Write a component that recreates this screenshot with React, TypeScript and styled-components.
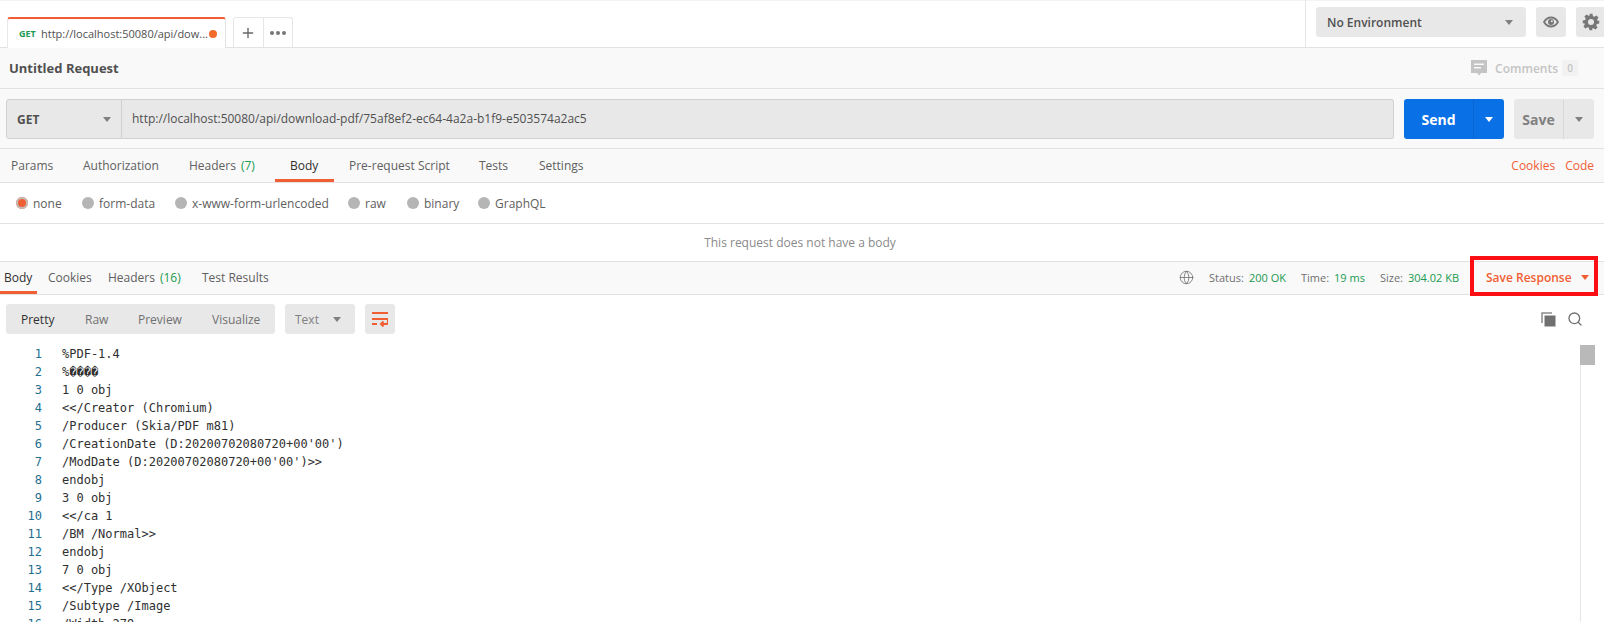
import styled, { createGlobalStyle } from 'styled-components';
import { Globe, Plus, Search } from 'lucide-react';

const GlobalStyle = createGlobalStyle`
  html, body {
    margin: 0;
    padding: 0;
    background: #fff;
  }
  body {
    font-family: "Open Sans", "Liberation Sans", sans-serif;
    font-size: 12px;
    color: #505050;
  }
`;

const orange = '#f15e33';
const green = '#209a50';

const Page = styled.div`
  width: 1604px;
  height: 622px;
  overflow: hidden;
  display: flex;
  flex-direction: column;
`;

const TopBar = styled.header`
  height: 48px;
  flex: none;
  display: flex;
  align-items: flex-end;
  padding-left: 7px;
  border-top: 1px solid #f3f3f3;
  border-bottom: 1px solid #e2e2e2;
  box-sizing: border-box;
  background: #fff;
`;

const RequestTab = styled.div`
  width: 219px;
  height: 31px;
  margin-bottom: -1px;
  box-sizing: border-box;
  border-top: 2px solid ${orange};
  border-left: 1px solid #e8e8e8;
  border-right: 1px solid #e2e2e2;
  background: #fff;
  border-radius: 3px 3px 0 0;
  display: flex;
  align-items: center;
  padding-left: 11px;
`;

const MethodTag = styled.span`
  color: ${green};
  font-size: 9px;
  font-weight: 700;
  width: 22px;
`;

const TabUrl = styled.span`
  color: #505050;
  font-size: 11px;
  width: 168px;
  white-space: nowrap;
  overflow: hidden;
`;

const Dot = styled.span`
  width: 8px;
  height: 8px;
  border-radius: 50%;
  background: #f26b2a;
`;

const TabActions = styled.div`
  margin-left: 7px;
  width: 60px;
  height: 30px;
  box-sizing: border-box;
  border: 1px solid #e6e6e6;
  border-bottom: none;
  border-radius: 3px 3px 0 0;
  display: flex;
`;

const TabAction = styled.div`
  flex: 1;
  display: flex;
  align-items: center;
  justify-content: center;
  color: #666;
  & + & {
    border-left: 1px solid #e6e6e6;
  }
`;

const Ellipsis = styled.span`
  display: flex;
  gap: 2px;
  i {
    width: 4px;
    height: 4px;
    border-radius: 50%;
    background: #777;
  }
`;

const EnvArea = styled.div`
  margin-left: auto;
  height: 47px;
  width: 299px;
  flex: none;
  box-sizing: border-box;
  border-left: 1px solid #e6e6e6;
  padding: 7px 0 0 10px;
  display: flex;
  gap: 10px;
  align-items: flex-start;
`;

const EnvSelect = styled.div`
  width: 210px;
  height: 30px;
  flex: none;
  box-sizing: border-box;
  background: #e8e8e8;
  border-radius: 3px;
  display: flex;
  align-items: center;
  justify-content: space-between;
  padding: 0 13px 0 11px;
  font-weight: 600;
  color: #505050;
`;

const Caret = styled.span<{ $color?: string }>`
  width: 0;
  height: 0;
  flex: none;
  border-left: 4px solid transparent;
  border-right: 4px solid transparent;
  border-top: 5px solid ${({ $color }) => $color || '#808080'};
`;

const IconSquare = styled.div`
  width: 30px;
  height: 30px;
  flex: none;
  background: #e8e8e8;
  border-radius: 3px;
  display: flex;
  align-items: center;
  justify-content: center;
  color: #777;
`;

const TitleRow = styled.div`
  height: 41px;
  flex: none;
  box-sizing: border-box;
  background: #f9f9f9;
  border-bottom: 1px solid #e2e2e2;
  display: flex;
  align-items: center;
  padding: 0 26px 0 9px;
`;

const Title = styled.h1`
  margin: 0;
  font-size: 13px;
  font-weight: 700;
  color: #505050;
`;

const Comments = styled.div`
  margin-left: auto;
  display: flex;
  align-items: center;
  color: #c4c4c4;
  font-weight: 600;
  gap: 8px;
`;

const CountBox = styled.span`
  width: 16px;
  height: 16px;
  margin-left: -4px;
  background: #f2f2f2;
  border-radius: 2px;
  font-size: 10px;
  display: flex;
  align-items: center;
  justify-content: center;
`;

const UrlRow = styled.div`
  height: 60px;
  flex: none;
  background: #f9f9f9;
  border-bottom: 1px solid #e2e2e2;
  box-sizing: border-box;
  display: flex;
  align-items: center;
  padding: 1px 10px 0 6px;
`;

const MethodSelect = styled.div`
  width: 116px;
  height: 40px;
  flex: none;
  box-sizing: border-box;
  background: #e8e8e8;
  border: 1px solid #d0d0d0;
  border-radius: 3px 0 0 3px;
  display: flex;
  align-items: center;
  justify-content: space-between;
  padding: 0 10px;
  font-weight: 700;
  color: #505050;
`;

const UrlInput = styled.div`
  flex: 1;
  height: 40px;
  box-sizing: border-box;
  background: #e8e8e8;
  border: 1px solid #d0d0d0;
  border-left: none;
  border-radius: 0 3px 3px 0;
  display: flex;
  align-items: center;
  padding: 0 0 2px 10px;
  color: #505050;
`;

const SplitButton = styled.div<{ $primary?: boolean; $main: number; $side: number }>`
  height: 40px;
  flex: none;
  margin-left: 10px;
  display: grid;
  grid-template-columns: ${({ $main, $side }) => `${$main}px ${$side}px`};
  border-radius: 3px;
  font-size: 14px;
  font-weight: 700;
  background: ${({ $primary }) => ($primary ? '#0a70e6' : '#e8e8e8')};
  color: ${({ $primary }) => ($primary ? '#fff' : '#808080')};
  & > * {
    display: flex;
    align-items: center;
    justify-content: center;
  }
  & > * + * {
    border-left: 1px solid ${({ $primary }) => ($primary ? '#0a65cf' : '#d8d8d8')};
  }
`;

const BuilderTabs = styled.nav`
  height: 34px;
  flex: none;
  background: #f9f9f9;
  border-bottom: 1px solid #e2e2e2;
  box-sizing: border-box;
  display: flex;
  align-items: stretch;
  padding: 0 10px 0 11px;
`;

const Tab = styled.div<{ $active?: boolean; $width: number; $pad?: number }>`
  width: ${({ $width }) => $width}px;
  padding-left: ${({ $pad }) => $pad || 0}px;
  box-sizing: border-box;
  flex: none;
  display: flex;
  align-items: center;
  white-space: nowrap;
  color: ${({ $active }) => ($active ? '#303030' : '#606060')};
  border-bottom: 3px solid ${({ $active }) => ($active ? orange : 'transparent')};
  border-top: 3px solid transparent;
  b {
    font-weight: 400;
    color: ${green};
    margin-left: 5px;
  }
`;

const ResponseTab = styled(Tab)`
  border-top-width: 1px;
`;

const Links = styled.div`
  margin-left: auto;
  display: flex;
  align-items: center;
  gap: 10px;
  color: ${orange};
`;

const RadioRow = styled.div`
  height: 41px;
  flex: none;
  box-sizing: border-box;
  border-bottom: 1px solid #e2e2e2;
  display: flex;
  align-items: center;
  padding-left: 16px;
`;

const Radio = styled.label<{ $width: number }>`
  width: ${({ $width }) => $width}px;
  flex: none;
  display: flex;
  align-items: center;
  gap: 5px;
  color: #606060;
`;

const RadioMark = styled.span<{ $on?: boolean }>`
  width: 12px;
  height: 12px;
  flex: none;
  border-radius: 50%;
  background: ${({ $on }) => ($on ? orange : '#b5b5b5')};
  box-shadow: ${({ $on }) => ($on ? 'inset 0 0 0 2px #c4bcb8' : 'none')};
`;

const NoBody = styled.div`
  height: 38px;
  flex: none;
  box-sizing: border-box;
  display: flex;
  align-items: center;
  justify-content: center;
  padding-right: 4px;
  color: #8a8a8a;
  border-bottom: 1px solid #e2e2e2;
`;

const ResponseBar = styled.div`
  height: 33px;
  flex: none;
  box-sizing: border-box;
  background: #f9f9f9;
  border-bottom: 1px solid #e2e2e2;
  display: flex;
  align-items: stretch;
`;

const Stats = styled.div`
  margin-left: auto;
  padding-bottom: 2px;
  display: flex;
  align-items: center;
  font-size: 11px;
  color: #707070;
`;

const Stat = styled.span`
  margin-left: 15px;
  b {
    font-weight: 400;
    color: ${green};
    margin-left: 5px;
  }
`;

const SaveResponse = styled.div`
  position: relative;
  width: 128px;
  margin: 0 6px 0 11px;
  box-sizing: border-box;
  display: flex;
  align-items: center;
  gap: 9px;
  padding: 0 0 2px 16px;
  color: ${orange};
  font-weight: 600;
  &::after {
    content: '';
    position: absolute;
    left: 0;
    right: 0;
    top: -6px;
    bottom: -2px;
    border: 4px solid #fb0f14;
  }
`;

const Controls = styled.div`
  height: 50px;
  flex: none;
  display: flex;
  align-items: flex-start;
  box-sizing: border-box;
  padding: 9px 21px 0 6px;
  gap: 10px;
`;

const Segments = styled.div`
  width: 269px;
  height: 30px;
  background: #e8e8e8;
  border-radius: 3px;
  display: flex;
  align-items: center;
  flex: none;
`;

const Segment = styled.span<{ $active?: boolean; $width: number; $pad: number }>`
  width: ${({ $width }) => $width}px;
  padding-left: ${({ $pad }) => $pad}px;
  box-sizing: border-box;
  flex: none;
  color: ${({ $active }) => ($active ? '#303030' : '#707070')};
`;

const FormatSelect = styled.div`
  width: 70px;
  height: 30px;
  flex: none;
  box-sizing: border-box;
  background: #e8e8e8;
  border-radius: 3px;
  display: flex;
  align-items: center;
  justify-content: space-between;
  padding: 0 14px 0 10px;
  color: #808080;
`;

const ViewerTools = styled.div`
  margin-left: auto;
  height: 30px;
  display: flex;
  align-items: center;
  gap: 11px;
  color: #707070;
`;

const CodeArea = styled.div`
  flex: 1;
  min-height: 0;
  position: relative;
  font-family: "DejaVu Sans Mono", "Liberation Mono", monospace;
  font-size: 12px;
  line-height: 18px;
`;

const CodeLine = styled.div`
  display: flex;
  white-space: pre;
  color: #303030;
`;

const LineNumber = styled.span`
  width: 42px;
  flex: none;
  margin-right: 20px;
  text-align: right;
  color: #1f6f8f;
`;

const ScrollTrack = styled.div`
  position: absolute;
  right: 10px;
  top: 0;
  bottom: 0;
  width: 14px;
  border-left: 1px solid #e6e6e6;
  box-sizing: border-box;
  &::before {
    content: '';
    position: absolute;
    left: -1px;
    width: 15px;
    top: 0;
    height: 20px;
    background: #b9b9b9;
  }
`;

const requestTabs = [
  { label: 'Params', width: 72 },
  { label: 'Authorization', width: 106 },
  { label: 'Headers', count: '(7)', width: 86 },
  { label: 'Body', width: 59, pad: 15, active: true },
  { label: 'Pre-request Script', width: 145, pad: 15 },
  { label: 'Tests', width: 60 },
  { label: 'Settings', width: 60 },
];

const bodyModes = [
  { label: 'none', width: 66, on: true },
  { label: 'form-data', width: 93 },
  { label: 'x-www-form-urlencoded', width: 173 },
  { label: 'raw', width: 59 },
  { label: 'binary', width: 71 },
  { label: 'GraphQL', width: 90 },
];

const responseTabs = [
  { label: 'Body', width: 37, pad: 4, active: true },
  { label: 'Cookies', width: 71, pad: 11 },
  { label: 'Headers', count: '(16)', width: 94 },
  { label: 'Test Results', width: 80 },
];

const views = [
  { label: 'Pretty', width: 64, pad: 15, active: true },
  { label: 'Raw', width: 53, pad: 15 },
  { label: 'Preview', width: 74, pad: 15 },
  { label: 'Visualize', width: 78, pad: 15 },
];

const lines = [
  '%PDF-1.4',
  '%\uFFFD\uFFFD\uFFFD\uFFFD',
  '1 0 obj',
  '<</Creator (Chromium)',
  '/Producer (Skia/PDF m81)',
  "/CreationDate (D:20200702080720+00'00')",
  "/ModDate (D:20200702080720+00'00')>>",
  'endobj',
  '3 0 obj',
  '<</ca 1',
  '/BM /Normal>>',
  'endobj',
  '7 0 obj',
  '<</Type /XObject',
  '/Subtype /Image',
  '/Width 279',
];

const EyeIcon = () => (
  <svg width="16" height="12" viewBox="0 0 16 12">
    <path d="M1 6c1.800-3 4-4.500 7-4.500S13.200 3 15 6c-1.800 3-4 4.500-7 4.500S2.800 9 1 6z" fill="none" stroke="currentColor" strokeWidth="1.800" />
    <circle cx="8" cy="6" r="3" fill="currentColor" />
    <circle cx="8.800" cy="5.200" r="1" fill="#e8e8e8" />
  </svg>
);

const GearIcon = () => (
  <svg width="18" height="18" viewBox="0 0 24 24" fill="currentColor">
    <path fillRule="evenodd" d="M10 1h4l.6 3.200 1.900.8 2.700-1.800 2.800 2.800-1.800 2.700.8 1.900L23 10v4l-3.200.6-.8 1.900 1.800 2.700-2.800 2.800-2.700-1.800-1.900.8L13.900 23h-4l-.6-3.200-1.900-.8-2.700 1.800-2.800-2.800 1.800-2.700-.8-1.900L1 14v-4l3.200-.6.8-1.900-1.800-2.700 2.800-2.800 2.700 1.800 1.900-.8zM12 8a4 4 0 1 0 0 8 4 4 0 0 0 0-8z" />
  </svg>
);

const CommentIcon = () => (
  <svg width="16" height="16" viewBox="0 0 16 16" fill="currentColor">
    <path fillRule="evenodd" d="M0 0h16v13h-6l-2 2.500L6 13H0zM3 3.500v1.500h10V3.500zM3 7v1.500h7V7z" />
  </svg>
);

const WrapIcon = () => (
  <svg width="16" height="16" viewBox="0 0 16 16" fill="none" stroke={orange} strokeWidth="2">
    <path d="M0 2h16M0 8h16v3a2 2 0 0 1-2 2H9M11.500 10.500L9 13l2.500 2.500M0 13h5" />
  </svg>
);

const CopyIcon = () => (
  <svg width="15" height="15" viewBox="0 0 15 15">
    <path d="M1 11V1h10" fill="none" stroke="#8a8a8a" strokeWidth="1.500" />
    <rect x="3.500" y="3.500" width="11" height="11" fill="#707070" />
  </svg>
);

export default function App() {
  return (
    <Page>
      <GlobalStyle />
      <TopBar>
        <RequestTab>
          <MethodTag>GET</MethodTag>
          <TabUrl>http://localhost:50080/api/dow...</TabUrl>
          <Dot />
        </RequestTab>
        <TabActions>
          <TabAction><Plus size={16} strokeWidth={2} /></TabAction>
          <TabAction><Ellipsis><i /><i /><i /></Ellipsis></TabAction>
        </TabActions>
        <EnvArea>
          <EnvSelect>No Environment<Caret /></EnvSelect>
          <IconSquare><EyeIcon /></IconSquare>
          <IconSquare><GearIcon /></IconSquare>
        </EnvArea>
      </TopBar>

      <TitleRow>
        <Title>Untitled Request</Title>
        <Comments>
          <CommentIcon />
          Comments
          <CountBox>0</CountBox>
        </Comments>
      </TitleRow>

      <UrlRow>
        <MethodSelect>GET<Caret /></MethodSelect>
        <UrlInput>http://localhost:50080/api/download-pdf/75af8ef2-ec64-4a2a-b1f9-e503574a2ac5</UrlInput>
        <SplitButton $primary $main={69} $side={31}>
          <span>Send</span>
          <span><Caret $color="#fff" /></span>
        </SplitButton>
        <SplitButton $main={49} $side={31}>
          <span>Save</span>
          <span><Caret /></span>
        </SplitButton>
      </UrlRow>

      <BuilderTabs>
        {requestTabs.map((tab) => (
          <Tab key={tab.label} $width={tab.width} $pad={tab.pad} $active={tab.active}>
            {tab.label}
            {tab.count && <b>{tab.count}</b>}
          </Tab>
        ))}
        <Links>
          <span>Cookies</span>
          <span>Code</span>
        </Links>
      </BuilderTabs>

      <RadioRow>
        {bodyModes.map((mode) => (
          <Radio key={mode.label} $width={mode.width}>
            <RadioMark $on={mode.on} />
            {mode.label}
          </Radio>
        ))}
      </RadioRow>

      <NoBody>This request does not have a body</NoBody>

      <ResponseBar>
        {responseTabs.map((tab) => (
          <ResponseTab key={tab.label} $width={tab.width} $pad={tab.pad} $active={tab.active}>
            {tab.label}
            {tab.count && <b>{tab.count}</b>}
          </ResponseTab>
        ))}
        <Stats>
          <Globe size={15} strokeWidth={1.300} />
          <Stat>Status:<b>200 OK</b></Stat>
          <Stat>Time:<b>19 ms</b></Stat>
          <Stat>Size:<b>304.02 KB</b></Stat>
        </Stats>
        <SaveResponse>
          Save Response
          <Caret $color={orange} />
        </SaveResponse>
      </ResponseBar>

      <Controls>
        <Segments>
          {views.map((view) => (
            <Segment key={view.label} $width={view.width} $pad={view.pad} $active={view.active}>
              {view.label}
            </Segment>
          ))}
        </Segments>
        <FormatSelect>Text<Caret /></FormatSelect>
        <IconSquare><WrapIcon /></IconSquare>
        <ViewerTools>
          <CopyIcon />
          <Search size={16} strokeWidth={2} />
        </ViewerTools>
      </Controls>

      <CodeArea>
        {lines.map((line, index) => (
          <CodeLine key={index}>
            <LineNumber>{index + 1}</LineNumber>
            {line}
          </CodeLine>
        ))}
        <ScrollTrack />
      </CodeArea>
    </Page>
  );
}
